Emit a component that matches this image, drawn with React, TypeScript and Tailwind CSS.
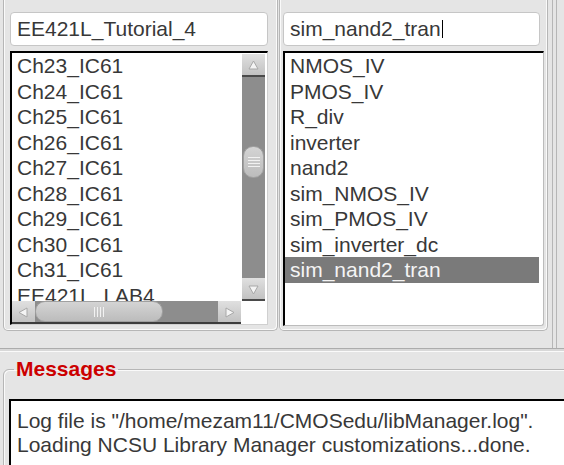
import React from "react"

const leftItems = [
  "Ch23_IC61",
  "Ch24_IC61",
  "Ch25_IC61",
  "Ch26_IC61",
  "Ch27_IC61",
  "Ch28_IC61",
  "Ch29_IC61",
  "Ch30_IC61",
  "Ch31_IC61",
  "EE421L_LAB4",
]

const rightItems = [
  "NMOS_IV",
  "PMOS_IV",
  "R_div",
  "inverter",
  "nand2",
  "sim_NMOS_IV",
  "sim_PMOS_IV",
  "sim_inverter_dc",
  "sim_nand2_tran",
]

function Arrow({ dir }: { dir: "up" | "down" | "left" | "right" }) {
  const pts = {
    up: "11.5,7 16,15 7,15",
    down: "7,8 16,8 11.5,16",
    left: "7,11.5 15,7 15,16",
    right: "8,7 16,11.5 8,16",
  }[dir]
  return (
    <svg width="23" height="21" viewBox="0 0 23 21" className="block">
      <polygon points={pts} fill="#f4f4f4" stroke="#a8a8a8" strokeWidth="1" />
    </svg>
  )
}

function ArrowButton({ dir, className }: { dir: "up" | "down" | "left" | "right"; className: string }) {
  return (
    <div className={`flex shrink-0 items-center justify-center bg-gradient-to-b from-[#e0e0e0] to-[#c2c2c2] border-b-2 border-[#4a4a4a] ${className}`}>
      <Arrow dir={dir} />
    </div>
  )
}

function InputBox({ value, caret }: { value: string; caret?: boolean }) {
  return (
    <div className="flex h-[34px] items-center rounded-[4px] border border-[#c6c6c6] bg-white pl-[6px] leading-[24px]">
      <span>{value}</span>
      {caret && <span className="ml-px inline-block h-[18px] w-px bg-black" />}
    </div>
  )
}

function LeftList() {
  return (
    <div className="mt-[5px] w-[258px] border-l-2 border-t-2 border-b border-r border-l-black border-t-black border-b-[#d0d0d0] border-r-[#d0d0d0] bg-white pr-[2px]">
      <div className="flex h-[248px]">
        <div className="min-w-0 flex-1 overflow-hidden pl-[5px] leading-[25.5px] whitespace-nowrap">
          {leftItems.map((it) => (
            <div key={it}>{it}</div>
          ))}
        </div>
        <div className="flex w-[23px] shrink-0 flex-col pt-px">
          <ArrowButton dir="up" className="h-[23px]" />
          <div className="flex-1 bg-[#8d8d8d] pt-[69px]">
            <div className="mx-px flex h-[32px] flex-col items-center justify-center gap-[2px] rounded-[10px] border border-[#a0a0a0] bg-gradient-to-b from-[#d4d4d4] to-[#bcbcbc]">
              <div className="h-px w-[12px] bg-[#f2f2f2]" />
              <div className="h-px w-[12px] bg-[#f2f2f2]" />
              <div className="h-px w-[12px] bg-[#f2f2f2]" />
              <div className="h-px w-[12px] bg-[#f2f2f2]" />
            </div>
          </div>
          <ArrowButton dir="down" className="h-[23px]" />
        </div>
      </div>
      <div className="flex h-[23px]">
        <div className="flex w-[229px] shrink-0 border-b-2 border-[#3c3c3c] bg-[#8d8d8d]">
          <div className="flex w-[23px] shrink-0 items-center justify-center bg-gradient-to-b from-[#e0e0e0] to-[#c2c2c2]">
            <Arrow dir="left" />
          </div>
          <div className="flex w-[128px] shrink-0 items-center justify-center gap-[2px] rounded-[10px] border border-[#a0a0a0] bg-gradient-to-b from-[#d4d4d4] to-[#bcbcbc]">
            <div className="h-[10px] w-px bg-[#f2f2f2]" />
            <div className="h-[10px] w-px bg-[#f2f2f2]" />
            <div className="h-[10px] w-px bg-[#f2f2f2]" />
            <div className="h-[10px] w-px bg-[#f2f2f2]" />
          </div>
          <div className="flex-1" />
          <div className="flex w-[23px] shrink-0 items-center justify-center bg-gradient-to-b from-[#e0e0e0] to-[#c2c2c2]">
            <Arrow dir="right" />
          </div>
        </div>
        <div className="flex-1 bg-white" />
      </div>
    </div>
  )
}

function RightList() {
  return (
    <div className="mt-[5px] h-[275px] w-[261px] overflow-hidden rounded-br-[3px] border-l-2 border-t-2 border-b border-r border-l-black border-t-black border-b-[#bcbcbc] border-r-[#bcbcbc] bg-white pr-[4px] leading-[25.5px] whitespace-nowrap">
      {rightItems.map((it) => (
        <div
          key={it}
          className={it === "sim_nand2_tran" ? "bg-[#7a7a7a] pl-[5px] text-[#f4f4f4]" : "pl-[5px]"}
        >
          {it}
        </div>
      ))}
    </div>
  )
}

export default function App() {
  return (
    <div className="h-[465px] w-[564px] overflow-hidden bg-[#e5e5e5] font-['Liberation_Sans',Arial,sans-serif] text-[21px] text-[#383838]">
      <div className="flex items-start">
        <div className="ml-[3px] h-[331px] w-[275px] shrink-0 rounded-b-[5px] border-x border-b border-[#b6b6b6] pl-[6px] pt-[12px] shadow-[inset_1px_0_0_#fafafa,inset_-1px_-1px_0_#fafafa]">
          <div className="w-[258px]">
            <InputBox value="EE421L_Tutorial_4" />
          </div>
          <LeftList />
        </div>
        <div className="ml-px h-[331px] w-[269px] shrink-0 rounded-b-[5px] border-x border-b border-[#b6b6b6] pl-[3px] pt-[12px] shadow-[inset_1px_0_0_#fafafa,inset_-1px_-1px_0_#fafafa]">
          <div className="w-[257px]">
            <InputBox value="sim_nand2_tran" caret />
          </div>
          <RightList />
        </div>
        <div className="ml-[4px] h-[348px] w-[20px] shrink-0 border-l border-[#b6b6b6] pl-[3px]">
          <div className="h-full border-l border-[#b6b6b6]" />
        </div>
      </div>

      <div className="h-[4px] border-y border-t-[#acacac] border-b-[#fafafa] bg-[#d8d8d8]" />

      <fieldset className="ml-[3px] mt-[5px] w-[600px] rounded-tl-[6px] border border-[#b6b6b6] pl-[5px] shadow-[inset_1px_1px_0_#fafafa]">
        <legend className="ml-[5px] px-[2px] text-[21px] font-bold leading-[24px] text-[#cc0000]">Messages</legend>
        <div className="mt-[18px] h-[120px] border-l-2 border-t-2 border-black bg-white pl-[6px] pt-[8px] leading-[23.5px] whitespace-nowrap">
          <div>Log file is "/home/mezam11/CMOSedu/libManager.log".</div>
          <div>Loading NCSU Library Manager customizations...done.</div>
        </div>
      </fieldset>
    </div>
  )
}
